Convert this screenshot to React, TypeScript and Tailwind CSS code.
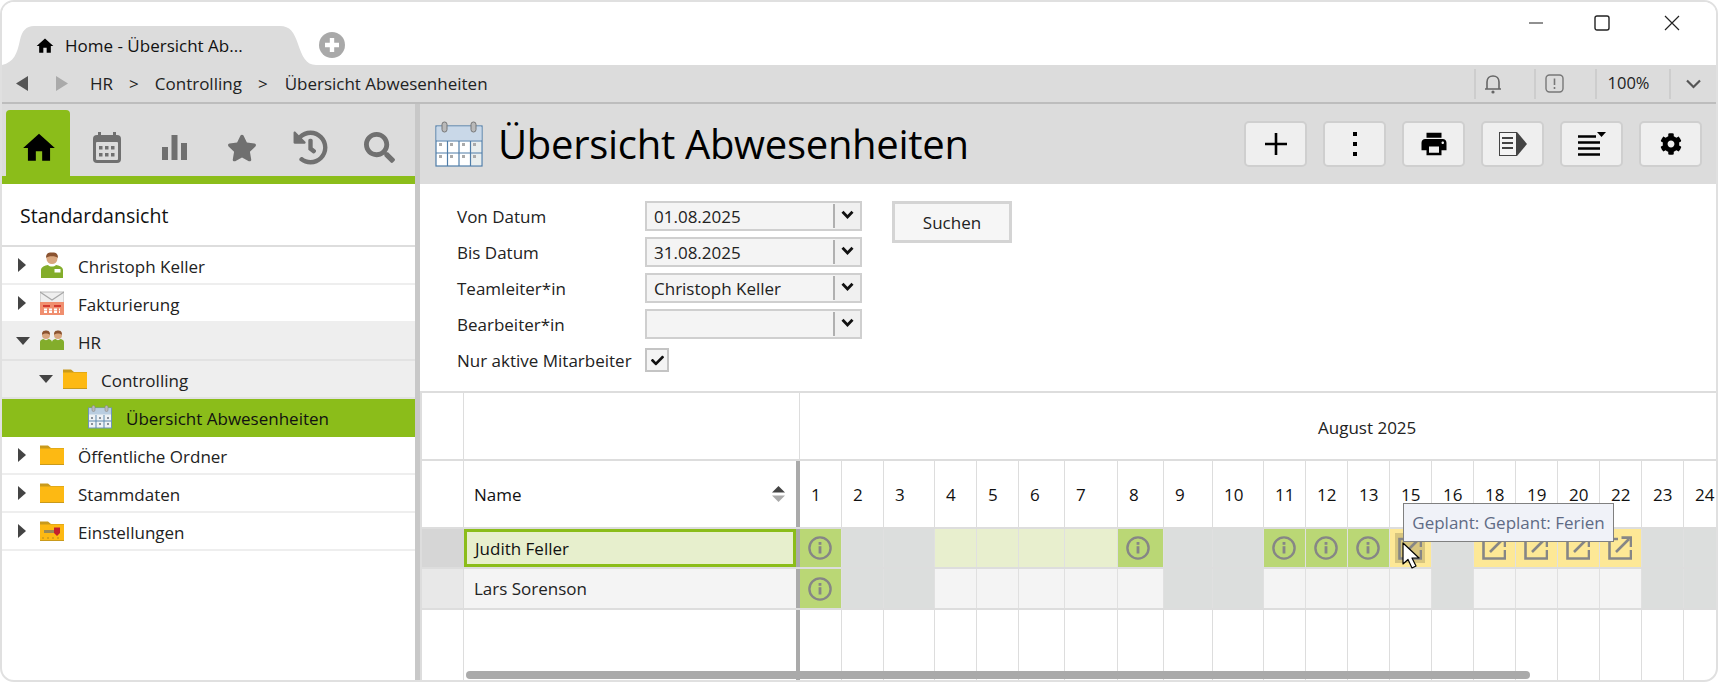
import React from "react";
import { MdHome, MdPrint } from "react-icons/md";
import { FaCog, FaCheck, FaStar, FaHistory, FaSearch } from "react-icons/fa";

const CalIcon = ({ w, h }: { w: number; h: number }) => (
  <svg width={w} height={h} viewBox="0 0 48 46">
    <rect x="1" y="5" width="46" height="40" fill="#fff" stroke="#4f7da8" strokeWidth="1.2" />
    <rect x="1.6" y="5.6" width="44.8" height="14" fill="#c9d8e8" />
    <rect x="36" y="20" width="10" height="24" fill="#e9eeee" />
    <path d="M1 20H47M1 32H47M12.5 20V45M24 20V45M35.5 20V45" stroke="#4f7da8" strokeWidth="1.2" fill="none" />
    {[4, 15, 27, 38].map((x) =>
      [22, 34].map((y) => <rect key={x + "-" + y} x={x} y={y} width="3" height="3" fill="#aaa" />),
    )}
    <rect x="7" y="1" width="5" height="10" rx="2.4" fill="#b9b9b9" stroke="#777" />
    <rect x="36" y="1" width="5" height="10" rx="2.4" fill="#b9b9b9" stroke="#777" />
  </svg>
);

const SmallCal = () => (
  <svg width="24" height="24" viewBox="0 0 24 24">
    <rect x="0.5" y="3" width="23" height="20" fill="#eef2f5" stroke="#6f95b8" />
    <rect x="1" y="3.5" width="22" height="6" fill="#b9cde0" />
    <path d="M8 10V23M16 10V23M1 16H23" stroke="#5f89ae" fill="none" />
    {[3, 11, 19].map((x) => [12, 18].map((y) => <rect key={x + "-" + y} x={x} y={y} width="2" height="2" fill="#8a9199" />))}
    <rect x="4" y="0.5" width="3" height="6" rx="1.5" fill="#b9b9b9" stroke="#888" strokeWidth="0.6" />
    <rect x="17" y="0.5" width="3" height="6" rx="1.5" fill="#b9b9b9" stroke="#888" strokeWidth="0.6" />
  </svg>
);

const Folder = () => (
  <svg width="24" height="24" viewBox="0 0 24 24">
    <path d="M0 2.5 H8 L11 5 H24 V22 H0Z" fill="#c99a1c" />
    <rect x="0" y="5.5" width="24" height="15.5" fill="#fdb913" />
  </svg>
);

const KeyFolder = () => (
  <svg width="24" height="24" viewBox="0 0 24 24">
    <path d="M0 2.5 H8 L11 5 H24 V22 H0Z" fill="#c99a1c" />
    <rect x="0" y="5.5" width="24" height="15.5" fill="#fdb913" />
    <rect x="4" y="11" width="12" height="3" fill="#9b8a55" />
    <path d="M14 8.5H20V14L17 17L14 14Z" fill="#c4202c" />
    <path d="M3 20V18M8 20V18M13 20V18M18 20V18" stroke="#b58a1d" />
  </svg>
);

const Person = () => (
  <svg width="24" height="26" viewBox="0 0 24 26">
    <circle cx="12" cy="6.5" r="5.5" fill="#d9a77f" />
    <path d="M6 6C6 1 8.5 .5 12 .5S18 1 18 6C16 3.5 8 3.5 6 6Z" fill="#8a5330" />
    <path d="M1 26V18C1 15 5 13.5 8 13C10 15 14 15 16 13C19 13.5 23 15 23 18V26Z" fill="#83ad2b" />
    <rect x="14.5" y="17" width="6" height="3.5" fill="#fff" />
  </svg>
);

const Persons = () => (
  <svg width="24" height="22" viewBox="0 0 24 22">
    {[0, 12].map((x) => (
      <g key={x} transform={`translate(${x} 0)`}>
        <circle cx="6" cy="5" r="4" fill="#d9a77f" />
        <path d="M2 5C2 1 4 .5 6 .5S10 1 10 5C8.5 3 3.5 3 2 5Z" fill="#8a5330" />
        <path d="M0 20V12C0 10 2 9.4 3.6 9C5 10.5 7 10.5 8.4 9C10 9.4 12 10 12 12V20Z" fill="#83ad2b" />
      </g>
    ))}
  </svg>
);

const Mail = () => (
  <svg width="24" height="24" viewBox="0 0 24 24">
    <rect x="0" y="1" width="24" height="13" fill="#efefef" stroke="#b0b0b0" strokeWidth="0.8" />
    <path d="M0 1L12 9L24 1" fill="none" stroke="#a8a8a8" strokeWidth="1.2" />
    <rect x="0" y="11" width="24" height="13" fill="#f08f6f" />
    <path d="M3 15H10M14 15H21" stroke="#c7201d" strokeWidth="1.5" />
    <path d="M4 18.5H20M4 21H20" stroke="#fff" strokeWidth="1.8" strokeDasharray="3 2" />
  </svg>
);

const Info = () => (
  <svg width="24" height="24" viewBox="0 0 24 24" className="block">
    <circle cx="12" cy="12" r="10.6" fill="none" stroke="#868686" strokeWidth="2.4" />
    <rect x="10.6" y="10.2" width="2.8" height="7.3" fill="#868686" />
    <rect x="10.6" y="6" width="2.8" height="2.8" fill="#868686" />
  </svg>
);

const Ext = () => (
  <svg width="24" height="24" viewBox="0 0 24 24" className="block">
    <path d="M10 3H1.5V22.5H23V14" fill="none" stroke="#868686" strokeWidth="2.6" />
    <path d="M8 16L21 3M13.5 1.6H23V11" fill="none" stroke="#868686" strokeWidth="2.6" />
  </svg>
);

const Chevron = () => (
  <svg width="13" height="10" viewBox="0 0 13 10">
    <path d="M1.5 1.8L6.5 7L11.5 1.8" fill="none" stroke="#111" strokeWidth="2.8" />
  </svg>
);

const Caret = ({ open }: { open: boolean }) =>
  open ? (
    <svg width="14" height="8" viewBox="0 0 14 8"><path d="M0 0H14L7 8Z" fill="#444" /></svg>
  ) : (
    <svg width="8" height="14" viewBox="0 0 8 14"><path d="M0 0L8 7L0 14Z" fill="#444" /></svg>
  );

type Tree = { label: string; level: number; icon: React.ReactNode; open?: boolean; leaf?: boolean; tone: string };
const tree: Tree[] = [
  { label: "Christoph Keller", level: 0, icon: <Person />, tone: "bg-white border-[#eeeeee]" },
  { label: "Fakturierung", level: 0, icon: <Mail />, tone: "bg-white border-[#eeeeee]" },
  { label: "HR", level: 0, icon: <Persons />, open: true, tone: "bg-[#eeeeee] border-[#e2e2e2]" },
  { label: "Controlling", level: 1, icon: <Folder />, open: true, tone: "bg-[#eeeeee] border-[#e2e2e2]" },
  { label: "Übersicht Abwesenheiten", level: 2, icon: <SmallCal />, leaf: true, tone: "bg-[#8bbd1a] border-[#8bbd1a]" },
  { label: "Öffentliche Ordner", level: 0, icon: <Folder />, tone: "bg-white border-[#eeeeee]" },
  { label: "Stammdaten", level: 0, icon: <Folder />, tone: "bg-white border-[#eeeeee]" },
  { label: "Einstellungen", level: 0, icon: <KeyFolder />, tone: "bg-white border-[#eeeeee]" },
];

const days = [
  [1, 42], [2, 42], [3, 51], [4, 42], [5, 42], [6, 46], [7, 53], [8, 46], [9, 49], [10, 51], [11, 42],
  [12, 42], [13, 42], [15, 42], [16, 42], [18, 42], [19, 42], [20, 42], [22, 42], [23, 42], [24, 42],
];

const G = "bg-[#bad775]";
const W = "bg-[#dcdedd]";
const L = "bg-[#e8efce]";
const Y = "bg-[#fde896]";
const N = "bg-[#f4f4f4]";
const row1: [string, string][] = [
  [G, "i"], [W, ""], [W, ""], [L, ""], [L, ""], [L, ""], [L, ""], [G, "i"], [W, ""], [W, ""], [G, "i"], [G, "i"], [G, "i"],
  [Y, "h"], [W, ""], [Y, "e"], [Y, "e"], [Y, "e"], [Y, "e"], [W, ""], [W, ""],
];
const row2: [string, string][] = [
  [G, "i"], [W, ""], [W, ""], [N, ""], [N, ""], [N, ""], [N, ""], [N, ""], [W, ""], [W, ""], [N, ""], [N, ""], [N, ""],
  [N, ""], [W, ""], [N, ""], [N, ""], [N, ""], [N, ""], [W, ""], [W, ""],
];

const Cells = ({ data }: { data: [string, string][] }) => (
  <>
    {data.map(([bg, kind], i) => (
      <div
        key={i}
        className={`${bg} shrink-0 h-full border-r border-[#e0e0e0] flex items-center pl-[8px]`}
        style={{ width: days[i][1] }}
      >
        {kind === "i" && <Info />}
        {kind === "e" && <Ext />}
        {kind === "h" && (
          <div className="relative -ml-[3px] bg-black/15 p-[3px]">
            <Ext />
          </div>
        )}
      </div>
    ))}
  </>
);

const Field = ({ label, value }: { label: string; value: string }) => (
  <>
    <div className="flex items-center h-[30px] pt-[1px]">{label}</div>
    <div className="h-[30px] border-2 border-[#cfcfcf] bg-[#f4f4f4] flex items-center pl-[7px]">
      <span className="flex-1 truncate pt-[1px]">{value}</span>
      <span className="w-[2px] h-[24px] bg-[#b0b0b0]" />
      <span className="w-[25px] h-[26px] bg-[#f0f0f0] flex items-center justify-center pb-[2px]"><Chevron /></span>
    </div>
  </>
);

const TB = ({ children }: { children: React.ReactNode }) => (
  <div className="w-[63px] h-[46px] rounded-[5px] border-2 border-[#cfcfcf] bg-[#efefef] flex items-center justify-center text-black">
    {children}
  </div>
);

const Sep = () => <span className="w-[2px] h-[30px] bg-[#cdcdcd]" />;

export default function App() {
  return (
    <div className="w-[1718px] h-[682px] bg-white">
      <div className="w-full h-full border-2 border-[#e0e0e0] rounded-[14px] overflow-hidden flex flex-col font-['Open_Sans',sans-serif] text-[17px] text-[#222]">
        {/* title bar */}
        <div className="h-[63px] shrink-0 flex items-end relative bg-white">
          <div className="relative w-[314px] h-[39px] shrink-0 flex items-center pl-[33px] gap-[10px] text-[#111]">
            <svg className="absolute inset-0" width="314" height="39" viewBox="0 0 314 39">
              <path d="M0 39C12 36 15 28 18 14C20 5 24 0 32 0H278C288 0 292 6 296 18C300 30 304 39 314 39Z" fill="#dcdcdc" />
            </svg>
            <MdHome className="relative" size={20} color="#000" />
            <span className="relative">Home - Übersicht Ab...</span>
          </div>
          <div className="w-[26px] h-[26px] rounded-full bg-[#a9a9a9] ml-[3px] mb-[7px] flex items-center justify-center">
            <svg width="16" height="16" viewBox="0 0 16 16"><path d="M8 1V15M1 8H15" stroke="#fff" strokeWidth="4.4" /></svg>
          </div>
          <div className="flex-1" />
          <div className="self-start flex items-center h-[40px] pr-[36px] gap-[52px] mt-[1px]">
            <svg width="16" height="16" viewBox="0 0 16 16"><path d="M1 8H15" stroke="#222" strokeWidth="1.2" /></svg>
            <svg className="-ml-[2px]" width="16" height="16" viewBox="0 0 16 16"><rect x="1" y="1" width="14" height="14" rx="2" fill="none" stroke="#222" strokeWidth="1.4" /></svg>
            <svg className="ml-[2px]" width="16" height="16" viewBox="0 0 16 16"><path d="M1 1L15 15M15 1L1 15" stroke="#222" strokeWidth="1.2" /></svg>
          </div>
        </div>
        {/* breadcrumb */}
        <div className="h-[39px] shrink-0 bg-[#dcdcdc] border-b-2 border-[#bdbdbd] flex items-center text-[#222]">
          <svg className="ml-[14px]" width="12" height="15" viewBox="0 0 12 15"><path d="M12 0V15L0 7.5Z" fill="#555" /></svg>
          <svg className="ml-[28px]" width="12" height="15" viewBox="0 0 12 15"><path d="M0 0V15L12 7.5Z" fill="#aaa" /></svg>
          <span className="ml-[22px]">HR</span>
          <span className="ml-[16px]">&gt;</span>
          <span className="ml-[16px]">Controlling</span>
          <span className="ml-[16px]">&gt;</span>
          <span className="ml-[17px]">Übersicht Abwesenheiten</span>
          <div className="flex-1" />
          <Sep />
          <span className="w-[58px] flex pl-[8px]">
            <svg width="18" height="20" viewBox="0 0 18 20"><path d="M3 15V8C3 4.5 5.5 2 9 2S15 4.5 15 8V15M1 15H17" fill="none" stroke="#666" strokeWidth="1.6" /><circle cx="9" cy="18" r="1.6" fill="#666" /></svg>
          </span>
          <Sep />
          <span className="w-[59px] flex pl-[9px]">
            <svg width="19" height="19" viewBox="0 0 19 19"><rect x="1" y="1" width="17" height="17" rx="3.5" fill="none" stroke="#777" strokeWidth="1.4" /><path d="M9.5 4.5V11M9.5 13V15" stroke="#777" strokeWidth="1.6" /></svg>
          </span>
          <Sep />
          <span className="w-[72px] text-center pr-[9px] text-[16.5px]">100%</span>
          <Sep />
          <span className="w-[45px] flex justify-center">
            <svg width="15" height="10" viewBox="0 0 15 10"><path d="M1 1.5L7.5 8L14 1.5" fill="none" stroke="#555" strokeWidth="2.2" /></svg>
          </span>
        </div>
        {/* body */}
        <div className="flex-1 flex min-h-0">
          <aside className="w-[413px] shrink-0 flex flex-col">
            <div className="h-[72px] shrink-0 bg-[#dcdcdc] flex items-end pl-[4px] text-[#707070]">
              <div className="w-[65px] h-[66px] rounded-t-[4px] bg-[#8bbd1a] flex items-center justify-center pt-[9px] pl-[2px]">
                <MdHome size={38} color="#000" />
              </div>
              <div className="w-[69px] ml-[2px] h-[66px] flex items-center justify-center pt-[9px]">
                <svg width="28" height="31" viewBox="0 0 28 31">
                  <rect x="0" y="3" width="28" height="28" rx="4" fill="#707070" />
                  <rect x="5" y="0" width="3" height="6" fill="#707070" /><rect x="20" y="0" width="3" height="6" fill="#707070" />
                  <rect x="3" y="10" width="22" height="18" rx="1" fill="#dcdcdc" />
                  {[6, 12, 18].map((x) => [14, 21].map((y) => <rect key={x + "-" + y} x={x} y={y} width="3.5" height="3.5" fill="#707070" />))}
                </svg>
              </div>
              <div className="w-[68px] h-[66px] flex items-center justify-center pt-[9px]">
                <svg width="25" height="25" viewBox="0 0 25 25"><path d="M0 12H6V25H0ZM9.5 0H15.5V25H9.5ZM19 8H25V25H19Z" fill="#707070" /></svg>
              </div>
              <div className="w-[69px] h-[66px] flex items-center justify-center pt-[9px]"><FaStar size={30} /></div>
              <div className="w-[69px] h-[66px] flex items-center justify-center pt-[9px]"><FaHistory size={35} /></div>
              <div className="w-[71px] h-[66px] flex items-center justify-center pt-[9px]"><FaSearch size={31} /></div>
            </div>
            <div className="h-[8px] shrink-0 bg-[#8bbd1a]" />
            <div className="h-[63px] shrink-0 border-b-2 border-[#dddddd] flex items-center pl-[18px] pt-[2px] text-[19.5px] text-[#111]">Standardansicht</div>
            {tree.map((t) => (
              <div key={t.label} className={`h-[38px] shrink-0 border-b-2 flex items-center ${t.tone}`} style={{ paddingLeft: 14 + t.level * 23 }}>
                <span className="w-[22px] flex justify-start">{!t.leaf && <span className={t.open ? "ml-0" : "ml-[2px]"}><Caret open={!!t.open} /></span>}</span>
                <span className={`w-[24px] h-[26px] flex items-center justify-center ${t.leaf ? "ml-[4px]" : "ml-[2px]"}`}>{t.icon}</span>
                <span className={`ml-[14px] pt-[3px] ${t.leaf ? "text-[#111]" : ""}`}>{t.label}</span>
              </div>
            ))}
          </aside>
          <div className="w-[5px] shrink-0 bg-[#c8c8c8]" />
          <main className="flex-1 min-w-0 flex flex-col">
            <div className="h-[80px] shrink-0 bg-[#dcdcdc] flex items-center pl-[15px]">
              <CalIcon w={48} h={46} />
              <h1 className="ml-[15px] text-[40px] text-[#000] leading-none tracking-[-0.3px]">Übersicht Abwesenheiten</h1>
              <div className="flex-1" />
              <div className="flex gap-[16px] pr-[14px]">
                <TB><svg width="22" height="22" viewBox="0 0 22 22"><path d="M11 0V22M0 11H22" stroke="#000" strokeWidth="2.6" /></svg></TB>
                <TB><svg width="6" height="24" viewBox="0 0 6 24"><path d="M1 0H5V4H1ZM1 10H5V14H1ZM1 20H5V24H1Z" fill="#000" /></svg></TB>
                <TB><MdPrint size={30} color="#000" /></TB>
                <TB>
                  <svg width="28" height="24" viewBox="0 0 28 24"><rect x=".5" y=".5" width="17" height="23" fill="#f4f4f4" stroke="#444" /><path d="M3 6H14M3 11H14M3 16H14" stroke="#444" strokeWidth="2" /><path d="M18 0L28 12L18 24Z" fill="#444" /></svg>
                </TB>
                <TB>
                  <svg width="28" height="24" viewBox="0 0 28 24"><path d="M0 4.5H18M0 10.5H22M0 16.5H22M0 22.5H22" stroke="#000" strokeWidth="2.4" /><path d="M19 0H28L23.5 5Z" fill="#000" /></svg>
                </TB>
                <TB><FaCog size={22} color="#000" /></TB>
              </div>
            </div>
            <div className="h-[207px] shrink-0 flex items-start pt-[17px] pl-[37px] text-[#222]">
              <div className="grid grid-cols-[188px_217px] gap-y-[6px]">
                <Field label="Von Datum" value="01.08.2025" />
                <Field label="Bis Datum" value="31.08.2025" />
                <Field label="Teamleiter*in" value="Christoph Keller" />
                <Field label="Bearbeiter*in" value="" />
                <div className="flex items-center h-[30px] pt-[1px] whitespace-nowrap">Nur aktive Mitarbeiter</div>
                <div className="h-[30px] flex items-center">
                  <span className="w-[24px] h-[24px] border-2 border-[#c4c4c4] bg-[#f4f4f4] flex items-center justify-center"><FaCheck size={13} color="#111" /></span>
                </div>
              </div>
              <button className="ml-[30px] w-[120px] h-[42px] border-[3px] border-[#d4d4d4] bg-[#f6f6f6] text-center text-[#222] pt-[1px]">Suchen</button>
            </div>
            <section className="flex-1 min-h-0 relative overflow-hidden border-t-2 border-l-2 border-[#dddddd] flex flex-col">
              <div className="h-[68px] shrink-0 border-b-2 border-[#dddddd] flex">
                <div className="w-[42px] shrink-0 border-r border-[#dddddd]" />
                <div className="w-[336px] shrink-0 border-r border-[#dddddd]" />
                <div className="flex-1 flex items-center pl-[518px] pt-[3px]">August 2025</div>
              </div>
              <div className="h-[68px] shrink-0 border-b-2 border-[#dddddd] flex">
                <div className="w-[42px] shrink-0 border-r border-[#dddddd]" />
                <div className="w-[332px] shrink-0 flex items-center px-[10px] justify-between">
                  <span className="text-[#111] pt-[1px]">Name</span>
                  <svg className="mr-[1px]" width="13" height="16" viewBox="0 0 13 16"><path d="M0 6.5L6.5 0L13 6.5Z" fill="#444" /><path d="M0 9.5L6.5 16L13 9.5Z" fill="#aaa" /></svg>
                </div>
                <div className="w-[4px] shrink-0 bg-[#aaaaaa]" />
                {days.map(([d, w]) => (
                  <div key={d} className="shrink-0 border-r border-[#dddddd] flex items-center pl-[11px] pt-[1px] text-[#111]" style={{ width: w }}>{d}</div>
                ))}
              </div>
              <div className="h-[40px] shrink-0 border-b-2 border-[#dddddd] flex">
                <div className="w-[42px] shrink-0 bg-[#d6d6d6]" />
                <div className="w-[332px] shrink-0 border-[3px] border-[#8bbd1a] bg-[#e7efcd] flex items-center pl-[8px] pt-[1px] text-[#111]">Judith Feller</div>
                <div className="w-[4px] shrink-0 bg-[#aaaaaa]" />
                <Cells data={row1} />
              </div>
              <div className="h-[41px] shrink-0 border-b-2 border-[#dddddd] flex">
                <div className="w-[42px] shrink-0 bg-[#e8e8e8] border-r border-[#dddddd]" />
                <div className="w-[332px] shrink-0 bg-[#f4f4f4] flex items-center pl-[10px] pt-[1px]">Lars Sorenson</div>
                <div className="w-[4px] shrink-0 bg-[#aaaaaa]" />
                <Cells data={row2} />
              </div>
              <div className="flex-1 flex">
                <div className="w-[42px] shrink-0 border-r border-[#dddddd]" />
                <div className="w-[332px] shrink-0" />
                <div className="w-[4px] shrink-0 bg-[#aaaaaa]" />
                {days.map(([d, w]) => (
                  <div key={d} className="shrink-0 border-r border-[#dddddd]" style={{ width: w }} />
                ))}
              </div>
              <div className="absolute left-[44px] bottom-[1px] w-[1064px] h-[8px] rounded-full bg-[#aaaaaa]" />
              <div className="absolute left-[981px] top-[110px] w-[211px] h-[39px] border border-[#808080] bg-[#f0f2f8] text-[#5f6b85] flex items-center justify-center whitespace-nowrap">Geplant: Geplant: Ferien</div>
              <svg className="absolute left-[980px] top-[149px]" width="20" height="28" viewBox="0 0 20 28">
                <path d="M1 1V22L6 17.5L10 26L14 24L10 16H17Z" fill="#fff" stroke="#000" strokeWidth="1.2" strokeLinejoin="round" />
              </svg>
            </section>
          </main>
        </div>
      </div>
    </div>
  );
}
